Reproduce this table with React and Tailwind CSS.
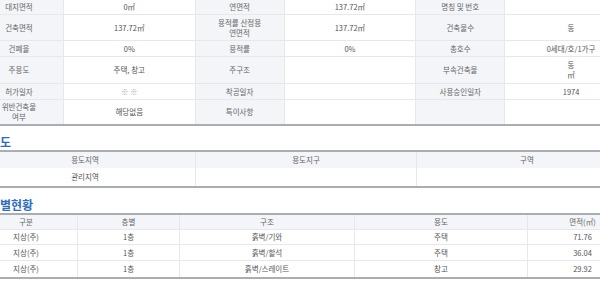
import React from 'react';

const font = { fontFamily: '"Noto Sans CJK KR", "Noto Sans", sans-serif' };

// 건축물 기본 정보 (label, value 쌍이 한 줄에 3개)
const basicRows = [
  { h: 'h-[15px]', cells: [['대지면적', '0㎡'], ['연면적', '137.72㎡'], ['명칭 및 번호', '']] },
  { h: 'h-[26px]', cells: [['건축면적', '137.72㎡'], ['용적률 산정용\n연면적', '137.72㎡'], ['건축물수', '동']] },
  { h: 'h-[16px]', cells: [['건폐율', '0%'], ['용적률', '0%'], ['총호수', '0세대/호/1가구']] },
  { h: 'h-[27px]', cells: [['주용도', '주택, 창고'], ['주구조', ''], ['부속건축물', '동\n㎡']] },
  { h: 'h-[16px]', cells: [['허가일자', '※ ※'], ['착공일자', ''], ['사용승인일자', '1974']] },
  { h: 'h-[24px]', last: true, cells: [['위반건축물\n여부', '해당없음'], ['특이사항', ''], ['', '']] },
];

const floors = [
  { h: 'h-[15px]', cells: ['지상(주)', '1층', '흙벽/기와', '주택', '71.76'] },
  { h: 'h-[16px]', cells: ['지상(주)', '1층', '흙벽/할석', '주택', '36.04'] },
  { h: 'h-[16px]', cells: ['지상(주)', '1층', '흙벽/스레이트', '창고', '29.92'] },
];

const floorCols = ['w-[103px]', 'w-[102px]', 'w-[175px]', 'w-[173px]', 'w-[109px]'];

function Cell({ children, className = '' }) {
  return (
    <div className={`flex items-center justify-center text-center whitespace-pre-line leading-[10px] ${className}`}>
      {children}
    </div>
  );
}

export default function App() {
  return (
    <div className="w-[600px] h-[287px] overflow-hidden bg-white text-[7.5px] text-[#666]" style={font}>
      <div className="ml-[-25px] w-[662px]">
        {/* 기본 정보 표 */}
        <div className="border-b-2 border-[#aaadb1]">
          {basicRows.map((row, i) => (
            <div key={i} className={`flex ${row.h} ${row.last ? '' : 'border-b border-[#e6e8eb]'}`}>
              {row.cells.map(([label, value], j) => (
                <React.Fragment key={j}>
                  <Cell className={`w-[89px] bg-[#f3f5f8] border-r border-[#e6e8eb] ${j === 2 ? 'w-[88px]' : ''}`}>{label}</Cell>
                  <Cell className={`w-[132px] text-[#555] ${j < 2 ? 'border-r border-[#e6e8eb]' : ''} ${value === '※ ※' ? 'text-[#aaa]' : ''}`}>
                    {value}
                  </Cell>
                </React.Fragment>
              ))}
            </div>
          ))}
        </div>

        <div className="h-[24px] pt-[10px] pl-[25px] text-[12px] leading-[12px] font-bold text-[#2f6db5]">도</div>

        {/* 용도지역 표 */}
        <div className="border-t-2 border-b-2 border-[#aaadb1]">
          <div className="flex h-[16px] bg-[#f3f5f8]">
            <Cell className="w-[221px] border-r border-[#e6e8eb]">용도지역</Cell>
            <Cell className="w-[221px] border-r border-[#e6e8eb]">용도지구</Cell>
            <Cell className="w-[220px]">구역</Cell>
          </div>
          <div className="flex h-[18px] text-[#555]">
            <Cell className="w-[221px] border-r border-[#e6e8eb]">관리지역</Cell>
            <Cell className="w-[221px] border-r border-[#e6e8eb]"></Cell>
            <Cell className="w-[220px]"></Cell>
          </div>
        </div>

        <div className="h-[25px] pt-[11px] pl-[25px] text-[12px] leading-[12px] font-bold text-[#2f6db5]">별현황</div>

        {/* 층별현황 표 */}
        <div className="border-t-2 border-b-2 border-[#aaadb1]">
          <div className="flex h-[15px] bg-[#f3f5f8] border-b border-[#e6e8eb]">
            {['구분', '층별', '구조', '용도', '면적(㎡)'].map((t, i) => (
              <Cell key={i} className={`${floorCols[i]} ${i < 4 ? 'border-r border-[#e6e8eb]' : ''}`}>{t}</Cell>
            ))}
          </div>
          {floors.map((row, i) => (
            <div key={i} className={`flex ${row.h} text-[#555] ${i < floors.length - 1 ? 'border-b border-[#e6e8eb]' : ''}`}>
              {row.cells.map((t, j) => (
                <Cell key={j} className={`${floorCols[j]} ${j < 4 ? 'border-r border-[#e6e8eb]' : ''}`}>{t}</Cell>
              ))}
            </div>
          ))}
        </div>
      </div>
    </div>
  );
}
